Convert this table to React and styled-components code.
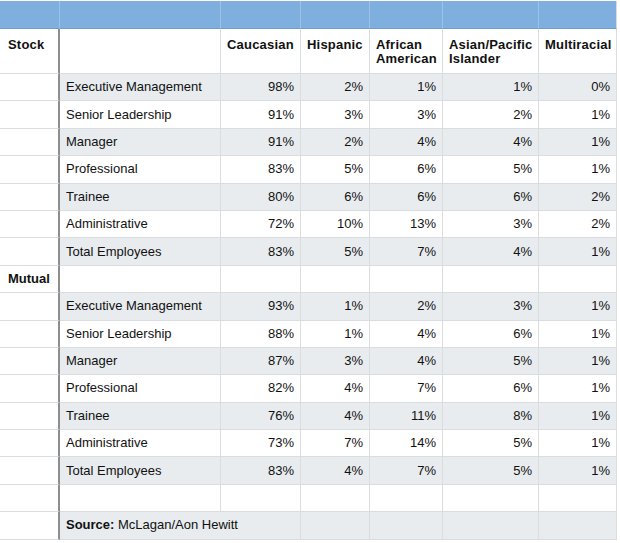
import React from "react";
import styled, { createGlobalStyle } from "styled-components";

const Global = createGlobalStyle`
  html, body { margin: 0; padding: 0; background: #ffffff; }
  body { font-family: "Liberation Sans", Arial, Helvetica, sans-serif; color: #111; }
`;

const COLS = "60px 161px 80px 69px 73px 96px 78px";

const Table = styled.div`
  width: 618px;
  display: flex;
  flex-direction: column;
  padding-top: 1px;
`;

const Row = styled.div`
  display: grid;
  grid-template-columns: ${COLS};
  height: ${(p) => p.$h}px;
  box-sizing: border-box;
`;

const BlueCell = styled.div`
  background: #7eafdf;
  border-right: 1px solid ${(p) => (p.$last ? "#d8dbde" : "#9cc2e8")};
  border-bottom: 1px solid #6f9fcf;
  box-sizing: border-box;
`;

const Cell = styled.div`
  box-sizing: border-box;
  grid-column: span ${(p) => p.$span || 1};
  border-bottom: 1px solid #dadde0;
  border-right: ${(p) => (p.$side ? "2px solid #8e8e8e" : "1px solid #dadde0")};
  background: ${(p) => (p.$shade ? "#e8ecef" : "#ffffff")};
  font-size: 13px;
  line-height: 14px;
  font-weight: ${(p) => (p.$bold ? 700 : 400)};
  display: flex;
  align-items: center;
  justify-content: ${(p) => (p.$num ? "flex-end" : "flex-start")};
  padding: ${(p) => (p.$num ? "0 6px 0 0" : p.$side ? "0 0 0 8px" : "0 0 0 6px")};
  white-space: nowrap;
`;

const HeadCell = styled.div`
  box-sizing: border-box;
  border-bottom: 1px solid #dadde0;
  border-right: ${(p) => (p.$side ? "2px solid #8e8e8e" : "1px solid #dadde0")};
  background: #ffffff;
  font-size: 13px;
  line-height: 13.5px;
  font-weight: 700;
  padding: 9px 0 0 ${(p) => (p.$side ? "8px" : "6px")};
  letter-spacing: 0.2px;
`;

const Strong = styled.span`
  font-weight: 700;
`;

const headers = ["Caucasian", "Hispanic", ["African", "American"], ["Asian/Pacific", "Islander"], "Multiracial"];

const stock = [
  ["Executive Management", 98, 2, 1, 1, 0],
  ["Senior Leadership", 91, 3, 3, 2, 1],
  ["Manager", 91, 2, 4, 4, 1],
  ["Professional", 83, 5, 6, 5, 1],
  ["Trainee", 80, 6, 6, 6, 2],
  ["Administrative", 72, 10, 13, 3, 2],
  ["Total Employees", 83, 5, 7, 4, 1],
];

const mutual = [
  ["Executive Management", 93, 1, 2, 3, 1],
  ["Senior Leadership", 88, 1, 4, 6, 1],
  ["Manager", 87, 3, 4, 5, 1],
  ["Professional", 82, 4, 7, 6, 1],
  ["Trainee", 76, 4, 11, 8, 1],
  ["Administrative", 73, 7, 14, 5, 1],
  ["Total Employees", 83, 4, 7, 5, 1],
];

const ROW_H = 27.4;

function DataRow({ side, label, values, shade }) {
  return (
    <Row $h={ROW_H}>
      <Cell $side $bold>{side}</Cell>
      <Cell $shade={shade}>{label}</Cell>
      {values.map((v, i) => (
        <Cell key={i} $num $shade={shade}>
          {v === "" ? "" : `${v}%`}
        </Cell>
      ))}
    </Row>
  );
}

export default function App() {
  const blank = ["", "", "", "", ""];
  const rows = [];
  stock.forEach((r) => rows.push({ side: "", label: r[0], values: r.slice(1) }));
  rows.push({ side: "Mutual", label: "", values: blank });
  mutual.forEach((r) => rows.push({ side: "", label: r[0], values: r.slice(1) }));
  rows.push({ side: "", label: "", values: blank });

  return (
    <>
      <Global />
      <Table>
        <Row $h={28}>
          {Array.from({ length: 7 }).map((_, i) => (
            <BlueCell key={i} $last={i === 6} />
          ))}
        </Row>
        <Row $h={45}>
          <HeadCell $side>Stock</HeadCell>
          <HeadCell />
          {headers.map((h, i) => (
            <HeadCell key={i}>
              {Array.isArray(h) ? (
                <>
                  {h[0]}
                  <br />
                  {h[1]}
                </>
              ) : (
                h
              )}
            </HeadCell>
          ))}
        </Row>
        {rows.map((r, i) => (
          <DataRow key={i} side={r.side} label={r.label} values={r.values} shade={i % 2 === 0} />
        ))}
        <Row $h={ROW_H}>
          <Cell $side />
          <Cell $shade $span={2}>
            <span>
              <Strong>Source:</Strong> McLagan/Aon Hewitt
            </span>
          </Cell>
          {Array.from({ length: 4 }).map((_, i) => (
            <Cell key={i} $shade />
          ))}
        </Row>
      </Table>
    </>
  );
}
